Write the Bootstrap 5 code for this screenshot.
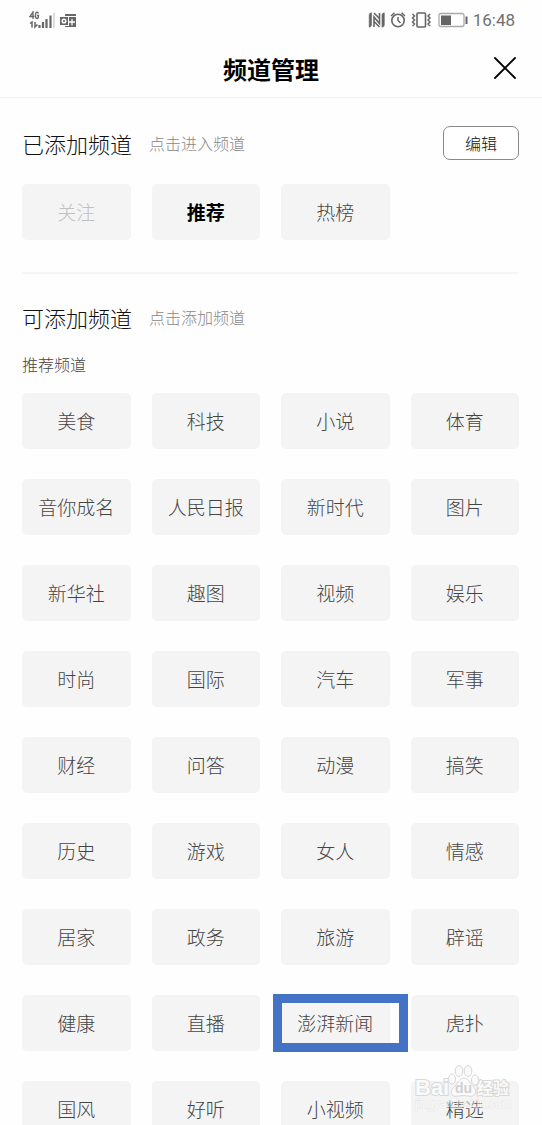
<!DOCTYPE html>
<html lang="zh-CN">
<head>
<meta charset="utf-8">
<meta name="viewport" content="width=device-width, initial-scale=1">
<title>频道管理</title>
<link href="https://cdn.jsdelivr.net/npm/bootstrap@5.3.0/dist/css/bootstrap.min.css" rel="stylesheet">
<style>
  body { font-family: "Noto Sans CJK SC", sans-serif; font-weight: 300; color: #111; background: #fefefe; }
  .status-strip { height: 40px; padding: 0 27px 0 29px; color: #666; }
  .clock { font: 400 17px/20px Roboto, sans-serif; color: #707070; margin-left: 3px; }
  .title-bar { height: 58px; border-bottom: 1px solid #f0f0f0; }
  .title-bar h1 { font-size: 24px; line-height: 36px; color: #000; font-weight: 700; }
  .close-btn { right: 22px; top: 13px; width: 30px; height: 30px; }
  .channel-page { padding: 0 23px 0 22px; overflow-y: auto; scrollbar-width: none; min-height: 0; }
  .channel-page::-webkit-scrollbar { display: none; }
  .section-head { height: 34px; margin-top: 28px; }
  .divider + section .section-head { margin-top: 26px; }
  .section-head h2 { font-size: 22px; line-height: 34px; font-weight: 300; color: #111; }
  .hint { font-size: 16px; line-height: 24px; color: #888; margin-left: 17px; }
  .edit-btn { width: 76px; height: 34px; font-size: 16px; line-height: 24px; font-weight: 300; color: #111; border: 1px solid #888; border-radius: 7px; background: #fff; }
  .group-label { font-size: 16px; line-height: 24px; font-weight: 300; color: #444; margin: 18px 0 17px; }
  .channel-grid { display: grid; grid-template-columns: repeat(4, minmax(0, 1fr)); gap: 30px 21px; }
  .channel { width: 100%; height: 56px; padding: 0; font-size: 19px; line-height: 28px; font-weight: 300; color: #444; background: #f4f4f4; border: 0; border-radius: 5px; white-space: nowrap; }
  .channel:disabled { color: #c0c0c0; opacity: 1; background: #f4f4f4; }
  .channel.current { color: #000; font-weight: 700; }
  .divider { height: 2px; background: #f6f6f6; margin-top: 32px; }
  .callout-frame { inset: -1px -18px -1px -8px; border: 9px solid #4472c4; pointer-events: none; }
  .watermark { right: 26px; bottom: 9px; width: 102px; height: 54px; pointer-events: none; }
</style>
</head>
<body>
<div class="d-flex flex-column vh-100 overflow-hidden position-relative">
  <div class="status-strip d-flex align-items-center justify-content-between flex-shrink-0">
    <div class="d-flex align-items-center gap-1">
      <svg width="27" height="18" viewBox="0 0 27 18" fill="none" stroke="#666" aria-label="4G">
        <path d="M4 8V1L1 5.500H5.500M9.500 2.500Q9 1.200 7.700 1.200Q6.500 1.500 6.500 4.500Q6.500 7.500 8 7.500Q9.500 7.500 9.500 4.500H8" stroke-width="1.300"/>
        <path d="M1 12.500L3 11V16.500M6 11V16L8.500 13.500" stroke-width="1.500"/>
        <path d="M10.500 14V17M14 11V17M17.500 8V17M21.500 4.500V17" stroke-width="2.200"/>
        <path d="M25 1.500V17" stroke="#ddd" stroke-width="2"/>
      </svg>
      <svg width="17" height="15" viewBox="0 0 17 15" aria-hidden="true">
        <path fill="#666" d="M5 1H16V3H5zM0 4H8V12H0zM9 4H16V14H5V13H9z"/>
        <circle cx="4" cy="8" r="1.800" fill="none" stroke="#fff" stroke-width="1.500"/>
        <path d="M9 9H15M12 6V12.500" stroke="#fff" stroke-width="1.300"/>
      </svg>
    </div>
    <div class="d-flex align-items-center">
      <svg width="103" height="20" viewBox="367 10 103 20" fill="none" stroke="#666" aria-hidden="true">
        <path d="M371.500 12.800Q369.200 13 369.200 15V27.200Q371.500 27 371.500 25ZM382 27.200Q384.300 27 384.300 25V12.800Q382 13 382 15Z" fill="#666" stroke-width=".600"/>
        <path d="M374 27V17L379.500 23.500V13" stroke-width="1.600"/>
        <path d="M374 13L379.500 18.500M374 21.500L379.500 27" stroke-width="1.600"/>
        <circle cx="398" cy="20.500" r="6.200" stroke-width="1.600"/>
        <path d="M398 17V20.500L400.500 23M391 16L394.500 12.800M405 16L401.500 12.800" stroke-width="1.500"/>
        <rect x="417" y="13" width="8.500" height="14" rx="1" stroke-width="1.600"/>
        <path d="M412.500 14L414.500 16L412.500 18L414.500 20L412.500 22L414.500 24L412.500 26M430 14L428 16L430 18L428 20L430 22L428 24L430 26" stroke-width="1.500"/>
        <rect x="439" y="13.500" width="25" height="13" rx="2" stroke="#aaa" stroke-width="1.300"/>
        <path d="M441 15.500H451V25H441Z" fill="#666" stroke="none"/>
        <path d="M466.500 16.500V24" stroke-width="2"/>
      </svg>
      <span class="clock">16:48</span>
    </div>
  </div>

  <header class="title-bar d-flex align-items-center justify-content-center position-relative flex-shrink-0">
    <h1 class="m-0">频道管理</h1>
    <button type="button" class="close-btn btn p-0 border-0 position-absolute d-flex align-items-center justify-content-center" aria-label="关闭">
      <svg width="24" height="24" viewBox="0 0 24 24" stroke="#000" stroke-width="1.800" stroke-linecap="round"><path d="M2 2L22 22M22 2L2 22"/></svg>
    </button>
  </header>

  <main class="channel-page flex-grow-1">
    <section>
      <div class="section-head d-flex align-items-center">
        <h2 class="m-0">已添加频道</h2>
        <span class="hint">点击进入频道</span>
        <button type="button" class="edit-btn btn p-0 ms-auto">编辑</button>
      </div>
      <div class="channel-grid mt-4">
        <button type="button" class="channel" disabled>关注</button>
        <button type="button" class="channel current">推荐</button>
        <button type="button" class="channel">热榜</button>
      </div>
    </section>
    <div class="divider"></div>
    <section>
      <div class="section-head d-flex align-items-center">
        <h2 class="m-0">可添加频道</h2>
        <span class="hint">点击添加频道</span>
      </div>
      <h3 class="group-label">推荐频道</h3>
      <div class="channel-grid">
        <button type="button" class="channel">美食</button>
        <button type="button" class="channel">科技</button>
        <button type="button" class="channel">小说</button>
        <button type="button" class="channel">体育</button>
        <button type="button" class="channel">音你成名</button>
        <button type="button" class="channel">人民日报</button>
        <button type="button" class="channel">新时代</button>
        <button type="button" class="channel">图片</button>
        <button type="button" class="channel">新华社</button>
        <button type="button" class="channel">趣图</button>
        <button type="button" class="channel">视频</button>
        <button type="button" class="channel">娱乐</button>
        <button type="button" class="channel">时尚</button>
        <button type="button" class="channel">国际</button>
        <button type="button" class="channel">汽车</button>
        <button type="button" class="channel">军事</button>
        <button type="button" class="channel">财经</button>
        <button type="button" class="channel">问答</button>
        <button type="button" class="channel">动漫</button>
        <button type="button" class="channel">搞笑</button>
        <button type="button" class="channel">历史</button>
        <button type="button" class="channel">游戏</button>
        <button type="button" class="channel">女人</button>
        <button type="button" class="channel">情感</button>
        <button type="button" class="channel">居家</button>
        <button type="button" class="channel">政务</button>
        <button type="button" class="channel">旅游</button>
        <button type="button" class="channel">辟谣</button>
        <button type="button" class="channel">健康</button>
        <button type="button" class="channel">直播</button>
        <div class="position-relative">
          <button type="button" class="channel">澎湃新闻</button>
          <span class="callout-frame position-absolute"></span>
        </div>
        <button type="button" class="channel">虎扑</button>
        <button type="button" class="channel">国风</button>
        <button type="button" class="channel">好听</button>
        <button type="button" class="channel">小视频</button>
        <button type="button" class="channel">精选</button>
      </div>
    </section>
  </main>

  <svg class="watermark position-absolute" viewBox="0 0 102 54" aria-hidden="true">
    <g fill="#fafafa" stroke="#d8d8d8" stroke-width="1">
      <g font-family="Liberation Sans, sans-serif" font-weight="700" font-size="22" paint-order="stroke" stroke-width="2">
        <text x="1" y="33">Bai</text>
        <text x="63" y="32" font-family="Noto Sans CJK SC, sans-serif" font-size="16">经验</text>
      </g>
      <ellipse cx="38" cy="17" rx="3.500" ry="5"/>
      <ellipse cx="45" cy="9" rx="3.800" ry="5.500"/>
      <ellipse cx="54" cy="9" rx="3.800" ry="5.500"/>
      <ellipse cx="61" cy="18" rx="3.500" ry="5"/>
      <path d="M50 16C54 16 55 20 59 24C65 30 60 36 54 34Q50 33 45 34C36 36 35 29 41 24C45 20 46 16 50 16Z"/>
    </g>
    <text x="41" y="31" font-family="Liberation Sans, sans-serif" font-weight="700" font-size="14" fill="#d0d0d0">du</text>
    <text x="1" y="46" font-family="Liberation Sans, sans-serif" font-size="12" fill="#fff" stroke="#ddd" stroke-width="1" paint-order="stroke" opacity=".500">jingyan.baidu.com</text>
  </svg>
</div>
<script src="https://cdn.jsdelivr.net/npm/bootstrap@5.3.0/dist/js/bootstrap.bundle.min.js"></script>
</body>
</html>
